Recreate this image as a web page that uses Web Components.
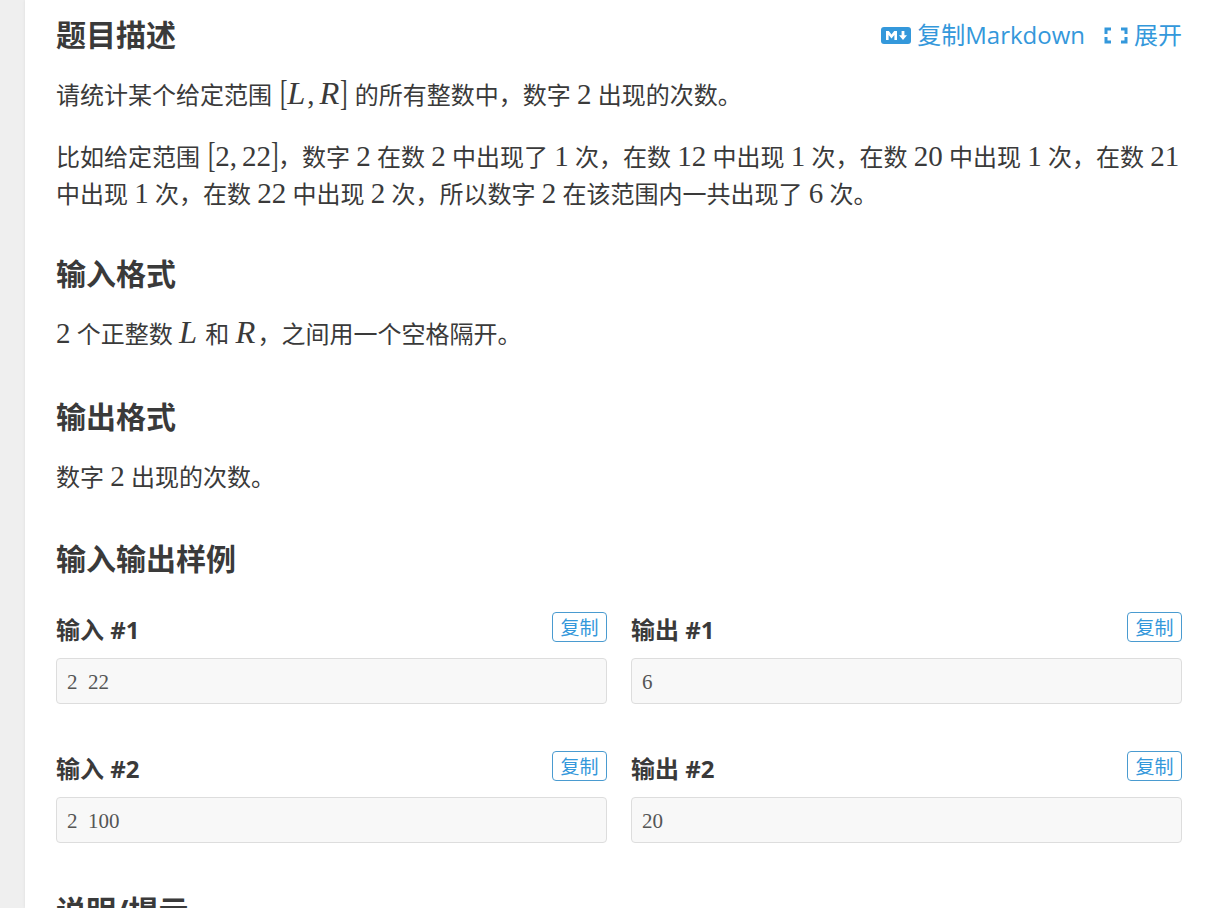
<!DOCTYPE html>
<html lang="zh-CN">
<head>
<meta charset="utf-8">
<title>题目描述</title>
<style>
  html, body { margin: 0; height: 908px; overflow: hidden; background: #efefef; }
  body { font-family: "Open Sans", "Noto Sans CJK SC", sans-serif; color: #3a3a3a; }
</style>
</head>
<body>
<lg-card>
  <lg-section heading="题目描述" style="--gap: 0px">
    <lg-actions slot="actions"></lg-actions>
    <p>请统计某个给定范围 <lg-math><span class="b open">[</span><i>L</i><span class="c">,</span><i>R</i><span class="b close">]</span></lg-math> 的所有整数中，数字 <lg-math>2</lg-math> 出现的次数。</p>
    <p class="next">比如给定范围 <lg-math><span class="b open">[</span>2<span class="c">,</span>22<span class="b">]</span></lg-math>，数字 <lg-math>2</lg-math> 在数 <lg-math>2</lg-math> 中出现了 <lg-math>1</lg-math> 次，在数 <lg-math>12</lg-math> 中出现 <lg-math>1</lg-math> 次，在数 <lg-math>20</lg-math> 中出现 <lg-math>1</lg-math> 次，在数 <lg-math>21</lg-math> 中出现 <lg-math>1</lg-math> 次，在数 <lg-math>22</lg-math> 中出现 <lg-math>2</lg-math> 次，所以数字 <lg-math>2</lg-math> 在该范围内一共出现了 <lg-math>6</lg-math> 次。</p>
  </lg-section>
  <lg-section heading="输入格式" style="--gap: 42px">
    <p><lg-math>2</lg-math> 个正整数 <lg-math><i>L</i></lg-math> 和 <lg-math><i>R</i></lg-math>，之间用一个空格隔开。</p>
  </lg-section>
  <lg-section heading="输出格式" style="--gap: 45px">
    <p><span>数字 <lg-math>2</lg-math> 出现的次数。</span></p>
  </lg-section>
  <lg-section heading="输入输出样例" style="--gap: 44px">
    <lg-samples>
      <lg-sample label="输入 #1">2 22</lg-sample>
      <lg-sample label="输出 #1">6</lg-sample>
      <lg-sample label="输入 #2">2 100</lg-sample>
      <lg-sample label="输出 #2">20</lg-sample>
    </lg-samples>
  </lg-section>
  <lg-section heading="说明/提示" style="--gap: 48px"></lg-section>
</lg-card>

<script>
class LgCard extends HTMLElement {
  constructor() {
    super();
    this.attachShadow({ mode: "open" });
    this.shadowRoot.innerHTML = `
      <style>
        :host {
          display: block;
          margin-left: 25px;
          height: 908px;
          box-sizing: border-box;
          padding: 15px 27px 0 31px;
          background: #fff;
          box-shadow: 0 0 3px rgba(0, 0, 0, .08);
          overflow: hidden;
        }
      </style>
      <slot></slot>`;
  }
}

class LgSection extends HTMLElement {
  constructor() {
    super();
    this.attachShadow({ mode: "open" });
    this.shadowRoot.innerHTML = `
      <style>
        :host { display: block; margin-top: var(--gap, 0); }
        header { display: flex; justify-content: space-between; align-items: center; height: 40px; }
        h2 { margin: 0; font-size: 30px; line-height: 40px; font-weight: 700; color: #3a3a3a; }
        ::slotted(p) { margin: 21px 0 0; font-size: 24px; line-height: 37px; color: #3a3a3a; }
        ::slotted(p.next) { margin-top: 25px; }
      </style>
      <header><h2>${this.getAttribute("heading")}</h2><slot name="actions"></slot></header>
      <slot></slot>`;
  }
}

class LgActions extends HTMLElement {
  constructor() {
    super();
    this.attachShadow({ mode: "open" });
    this.shadowRoot.innerHTML = `
      <style>
        :host { display: flex; align-items: center; margin-top: 0; color: #3498db; font-size: 24px; line-height: 40px; }
        span { display: flex; align-items: center; }
        svg { display: block; }
        .md { margin-right: 6px; }
        .expand { margin-left: 19px; margin-right: 6px; }
      </style>
      <span>
        <svg class="md" width="30" height="17" viewBox="0 0 30 17">
          <rect width="30" height="17" rx="3" fill="#3498db"/>
          <path fill="#fff" d="M5 13V4h2.8l2.7 3.4L13.2 4H16v9h-2.6V8l-2.9 3.4L7.6 8v5z"/>
          <path fill="#fff" d="M20.6 4h2.8v4.2h2.6L22 13l-4-4.8h2.6z"/>
        </svg>复制Markdown
      </span>
      <span>
        <svg class="expand" width="24" height="17" viewBox="0 0 24 17" fill="none" stroke="#3498db" stroke-width="3">
          <path d="M2 7V2h5M17 2h5v5M22 10v5h-5M7 15H2v-5"/>
        </svg>展开
      </span>`;
  }
}

class LgMath extends HTMLElement {
  constructor() {
    super();
    this.attachShadow({ mode: "open" });
    this.shadowRoot.innerHTML = `
      <style>
        :host { display: inline; font-family: "Liberation Serif", serif; font-size: 1.21em; line-height: 0; }
        ::slotted(.b) {
          display: inline-block; width: 7px; font-size: 1.2em; line-height: 0;
          transform: scaleX(.65); transform-origin: left; vertical-align: -.03em;
        }
        ::slotted(.open) { margin-left: 2px; }
        ::slotted(.close) { margin-left: -1px; margin-right: 1px; }
        ::slotted(.c) { margin-right: 5px; }
        ::slotted(i) { font-size: 1.12em; padding-right: 2px; }
      </style>
      <slot></slot>`;
  }
}

class LgSamples extends HTMLElement {
  constructor() {
    super();
    this.attachShadow({ mode: "open" });
    this.shadowRoot.innerHTML = `
      <style>
        :host { display: grid; grid-template-columns: 1fr 1fr; column-gap: 24px; row-gap: 47px; margin-top: 33px; }
      </style>
      <slot></slot>`;
  }
}

class LgSample extends HTMLElement {
  constructor() {
    super();
    this.attachShadow({ mode: "open" });
    this.shadowRoot.innerHTML = `
      <style>
        :host { display: block; }
        .head { display: flex; justify-content: space-between; align-items: flex-start; height: 46px; }
        h3 { margin: 3px 0 0; font-size: 24px; line-height: 30px; font-weight: 700; color: #3a3a3a; }
        button {
          box-sizing: border-box; width: 55px; height: 30px; padding: 0 0 2px;
          border: 1px solid #4a9bd0; border-radius: 4px; background: #fff;
          color: #3498db; font: 400 19px/25px "Noto Sans CJK SC", sans-serif;
        }
        pre {
          box-sizing: border-box; height: 46px; margin: 0; padding: 0 10px;
          border: 1px solid #ddd; border-radius: 4px; background: #f8f8f8;
          font: 400 21px/46px "Liberation Serif", serif; word-spacing: 5.25px; color: #555;
        }
      </style>
      <div class="head"><h3>${this.getAttribute("label")}</h3><button>复制</button></div>
      <pre><slot></slot></pre>`;
  }
}

customElements.define("lg-card", LgCard);
customElements.define("lg-section", LgSection);
customElements.define("lg-actions", LgActions);
customElements.define("lg-math", LgMath);
customElements.define("lg-samples", LgSamples);
customElements.define("lg-sample", LgSample);
</script>
</body>
</html>
